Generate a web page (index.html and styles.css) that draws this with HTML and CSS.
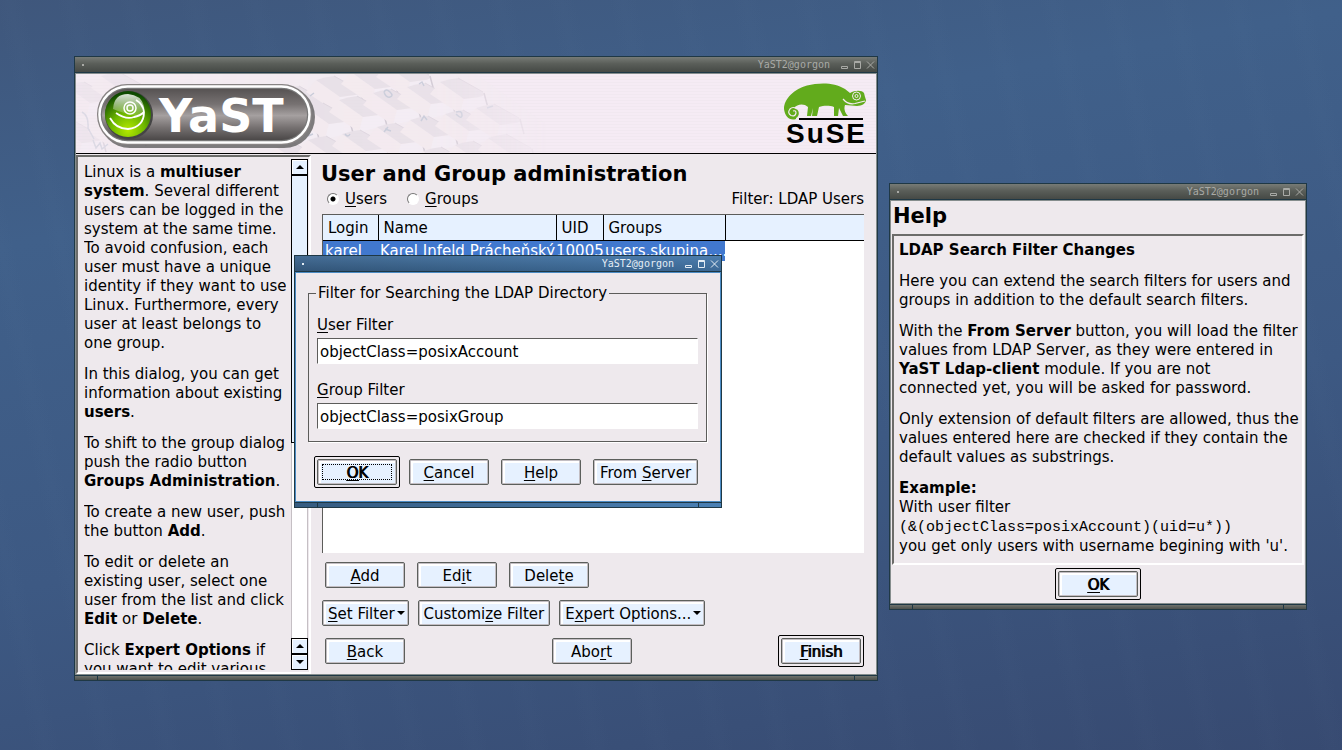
FILE: index.html
```html
<!DOCTYPE html>
<html lang="en">
<head>
<meta charset="utf-8">
<title>YaST2@gorgon</title>
<link rel="stylesheet" href="styles.css">
</head>
<body>
<svg class="defs" aria-hidden="true">
  <defs>
    <symbol id="wm" viewBox="0 0 36 10">
      <path d="M2.500 6.500h6v2h-6zM15.500 2.500h6v6h-6zM15.500 1.500h6v1h-6zM28 1.500l7 7M35 1.500l-7 7" fill="none" stroke="currentColor"/>
    </symbol>
    <g id="key">
      <path d="M0 4L24 21L20 36L-10 16Z" fill="#f3eaee"/>
      <path d="M24 21L40 19Q45 17 44 15L48 29L20 36Z" fill="#f3edf4"/>
      <path d="M0 4Q9 1 18 0L43 14Q46 18 39 19L24 21Z" fill="#e6dfe6"/>
      <path d="M44 15L48 30" stroke="#cdc6d0" stroke-width="1.500" fill="none"/>
      <path d="M18 0L43 14" stroke="#dcd4dd" fill="none"/>
    </g>
  </defs>
</svg>

<main class="desktop">
  <section class="window main-window" aria-label="User and Group administration">
    <div class="titlebar"><span class="dot"></span><span class="caption">YaST2@gorgon</span><svg class="wm"><use href="#wm"/></svg></div>
    <div class="body">
      <header class="banner">
        <svg class="keys" viewBox="0 0 480 79" aria-hidden="true">
          <defs>
            <linearGradient id="fade"><stop offset="0" stop-color="#fff" stop-opacity=".45"/><stop offset=".5" stop-color="#fff" stop-opacity=".9"/><stop offset=".75" stop-color="#fff" stop-opacity=".8"/><stop offset="1" stop-color="#fff" stop-opacity="0"/></linearGradient>
            <mask id="m"><rect width="480" height="79" fill="url(#fade)"/></mask>
          </defs>
          <g mask="url(#m)">
            <path d="M0 0H400L470 50V79H0Z" fill="#f2ebf0"/>
            <use href="#key" x="-10" y="8"/><use href="#key" x="-18" y="48"/><use href="#key" x="22" y="42"/>
            <use href="#key" x="25" y="-2"/><use href="#key" x="205" y="12"/><use href="#key" x="240" y="2"/><use href="#key" x="275" y="-6"/><use href="#key" x="310" y="-13"/>
            <use href="#key" x="195" y="35"/><use href="#key" x="229" y="29"/><use href="#key" x="263" y="22"/><use href="#key" x="297" y="15"/><use href="#key" x="331" y="9"/><use href="#key" x="364" y="4"/>
            <use href="#key" x="200" y="69"/><use href="#key" x="232" y="62"/><use href="#key" x="266" y="56"/><use href="#key" x="301" y="49"/><use href="#key" x="334" y="42"/><use href="#key" x="369" y="36"/><use href="#key" x="400" y="30"/>
            <use href="#key" x="313" y="79"/><use href="#key" x="347" y="73"/><use href="#key" x="379" y="67"/><use href="#key" x="412" y="60"/>
            <path d="M6 38Q13 42 12 54l6 11M17 66l3 8 4-5 2 6 6-5M308 18q2-4 6 0t0 5-6-5M343 10l3-2 2 4M380 38q6-2 6 3t-6-1M308 58l4-5m-3 2 6 2M345 47l3-5 3 4M269 60q3 4 5 0M234 22l4-3M232 62l5-2M119 67l5-6 3 5-4 4M411 34l6-2M160 18l6-3" fill="none" stroke="#c3c8d6" stroke-width="1.500"/>
          </g>
        </svg>
        <svg class="yast" viewBox="0 0 222 70" role="img" aria-label="YaST">
          <defs>
            <linearGradient id="pill" x2="0" y2="1"><stop offset="0" stop-color="#575353"/><stop offset=".3" stop-color="#777272"/><stop offset=".52" stop-color="#a5a0a0"/><stop offset=".75" stop-color="#777272"/><stop offset="1" stop-color="#4b4848"/></linearGradient>
            <radialGradient id="ball" cx=".5" cy=".85" r=".8"><stop offset="0" stop-color="#b4e800"/><stop offset=".45" stop-color="#6fb800"/><stop offset="1" stop-color="#0d4a00"/></radialGradient>
            <linearGradient id="gloss" x2="0" y2="1"><stop offset="0" stop-color="#fff" stop-opacity=".85"/><stop offset="1" stop-color="#fff" stop-opacity=".1"/></linearGradient>
          </defs>
          <rect x="5" y="5" width="216" height="62" rx="31" fill="#555" opacity=".75"/>
          <rect x="3" y="3" width="215" height="61" rx="30" fill="#888484"/>
          <rect x="5.500" y="5.500" width="210" height="56" rx="28" fill="#777" stroke="#fff" stroke-width="2.500"/>
          <rect x="8" y="8" width="205" height="51" rx="25" fill="url(#pill)"/>
          <circle cx="35" cy="34" r="24" fill="#444"/>
          <circle cx="34" cy="33" r="23" fill="url(#ball)"/>
          <path d="M19 28Q20 13 34 13Q47 14 50 25Q52 34 45 35Q30 33 19 28Z" fill="url(#gloss)"/>
          <path d="M22 32Q32 39 40 36Q46 35 50 31M16 37Q22 48 34 48Q50 46 50 31Q49 23 42 19" fill="none" stroke="#fff" stroke-width="1.800"/>
          <circle cx="36" cy="27" r="6" fill="none" stroke="#fff" stroke-width="1.500"/><circle cx="36" cy="27" r="3" fill="none" stroke="#fff" stroke-width="1.500"/>
          <text x="65" y="51" class="yast-text">YaST</text>
        </svg>
        <div class="suse">
          <svg viewBox="0 0 84 38" aria-hidden="true">
            <path d="M13 36C7 38 2 34 1 26C1 15 12 6 24 2.500C36-.5 51-1 62 6L67 10C72 7 79 7 81 10L82 14L83 17C83 20 79 23 74 23L62 22C61 25 61 29 65 33L60 33L56 25L55 33L51 33L51 24C45 22 40 23 36 24L34 33H29L30 25L28 33H24L25 24C21 20 14 21 11 25C17 26 17 33 13 35" fill="#62ab1c"/>
            <path d="M10 28q3-1 3 2-1 4-5 2.500Q4 30 7 26Q10 23 14 26" fill="none" stroke="#f5eaf4" stroke-width="1.200"/>
            <path d="M60 16Q65 22 72 20.500L82 18" fill="none" stroke="#f5eaf4" stroke-width="1.200"/>
            <circle cx="73.500" cy="13" r="4" fill="none" stroke="#f5eaf4"/><circle cx="73.500" cy="13" r="1.500" fill="none" stroke="#f5eaf4"/>
            <path d="M16 36H80" stroke="#000" stroke-width="2"/>
          </svg>
          <div class="suse-name"><span>S</span><span>u</span><span>S</span><span>E</span></div>
        </div>
      </header>
      <div class="columns">
        <aside class="sidebar">
          <div class="help-text">
            <p>Linux is a <b>multiuser<br>system</b>. Several different<br>users can be logged in the<br>system at the same time.<br>To avoid confusion, each<br>user must have a unique<br>identity if they want to use<br>Linux. Furthermore, every<br>user at least belongs to<br>one group.</p>
            <p>In this dialog, you can get<br>information about existing<br><b>users</b>.</p>
            <p>To shift to the group dialog<br>push the radio button<br><b>Groups Administration</b>.</p>
            <p>To create a new user, push<br>the button <b>Add</b>.</p>
            <p>To edit or delete an<br>existing user, select one<br>user from the list and click<br><b>Edit</b> or <b>Delete</b>.</p>
            <p>Click <b>Expert Options</b> if<br>you want to edit various</p>
          </div>
          <div class="scrollbar">
            <button class="arrow" type="button" aria-label="Scroll up"><svg viewBox="0 0 8 4"><path d="M0 4L4 0L8 4Z"/></svg></button>
            <div class="thumb"></div>
            <div class="track"></div>
            <button class="arrow" type="button" aria-label="Page up"><svg viewBox="0 0 8 4"><path d="M0 4L4 0L8 4Z"/></svg></button>
            <button class="arrow" type="button" aria-label="Scroll down"><svg viewBox="0 0 8 4"><path d="M0 0L4 4L8 0Z"/></svg></button>
          </div>
        </aside>
        <div class="content">
          <h1>User and Group administration</h1>
          <div class="view-row">
            <label><input type="radio" name="view" checked><span><u>U</u>sers</span></label>
            <label><input type="radio" name="view"><span><u>G</u>roups</span></label>
            <span class="filter">Filter: LDAP Users</span>
          </div>
          <div class="list">
            <table>
              <colgroup><col class="c-login"><col class="c-name"><col class="c-uid"><col class="c-groups"><col></colgroup>
              <thead><tr><th>Login</th><th>Name</th><th>UID</th><th>Groups</th><th></th></tr></thead>
              <tbody><tr class="selected"><td>karel</td><td>Karel Infeld Prácheňský</td><td class="uid">10005</td><td>users,skupina,...</td><td></td></tr></tbody>
            </table>
          </div>
          <div class="buttons inset"><button class="btn" type="button"><u>A</u>dd</button><button class="btn" type="button">Ed<u>i</u>t</button><button class="btn" type="button">Dele<u>t</u>e</button></div>
          <div class="buttons menus"><button class="btn" type="button"><u>S</u>et Filter<svg class="caret" viewBox="0 0 8 4"><path d="M0 0L4 4L8 0Z"/></svg></button><button class="btn" type="button">Customi<u>z</u>e Filter</button><button class="btn" type="button">E<u>x</u>pert Options...<svg class="caret" viewBox="0 0 8 4"><path d="M0 0L4 4L8 0Z"/></svg></button></div>
          <div class="buttons nav"><button class="btn" type="button"><u>B</u>ack</button><button class="btn" type="button">Abo<u>r</u>t</button><span class="default"><button class="btn" type="button"><u>F</u>inish</button></span></div>
        </div>
      </div>
    </div>
    <div class="grip"></div>
  </section>

  <section class="window help-window" aria-label="Help">
    <div class="titlebar"><span class="dot"></span><span class="caption">YaST2@gorgon</span><svg class="wm"><use href="#wm"/></svg></div>
    <div class="body">
      <h2>Help</h2>
      <div class="help-box">
        <p><b>LDAP Search Filter Changes</b></p>
        <p>Here you can extend the search filters for users and<br>groups in addition to the default search filters.</p>
        <p>With the <b>From Server</b> button, you will load the filter<br>values from LDAP Server, as they were entered in<br><b>YaST Ldap-client</b> module. If you are not<br>connected yet, you will be asked for password.</p>
        <p>Only extension of default filters are allowed, thus the<br>values entered here are checked if they contain the<br>default values as substrings.</p>
        <p><b>Example:</b><br>With user filter<br><code>(&amp;(objectClass=posixAccount)(uid=u*))</code><br>you get only users with username begining with 'u'.</p>
      </div>
      <div class="help-actions"><span class="default"><button class="btn" type="button"><u>O</u>K</button></span></div>
    </div>
    <div class="grip"></div>
  </section>

  <form class="window dialog" aria-label="LDAP filter">
    <div class="titlebar"><span class="dot"></span><span class="caption">YaST2@gorgon</span><svg class="wm"><use href="#wm"/></svg></div>
    <div class="body">
      <fieldset>
        <legend>Filter for Searching the LDAP Directory</legend>
        <label for="uf"><u>U</u>ser Filter</label>
        <input id="uf" type="text" value="objectClass=posixAccount">
        <label for="gf"><u>G</u>roup Filter</label>
        <input id="gf" type="text" value="objectClass=posixGroup">
      </fieldset>
      <div class="dialog-actions"><span class="default focused"><button class="btn" type="button"><u>O</u>K</button></span><button class="btn" type="button"><u>C</u>ancel</button><button class="btn" type="button"><u>H</u>elp</button><button class="btn" type="button">From <u>S</u>erver</button></div>
    </div>
    <div class="grip"></div>
  </form>
</main>
</body>
</html>
```
FILE: styles.css
```css
* { box-sizing: border-box; }
html, body { height: 100%; margin: 0; }
body { font: 15px/19px "DejaVu Sans", Verdana, sans-serif; color: #000; overflow: hidden; }
p { margin: 0 0 12px; white-space: nowrap; }
u { text-decoration: underline; text-underline-offset: 2px; text-decoration-skip-ink: none; }
h1, h2 { margin: 0; font-size: 21px; line-height: 28px; font-weight: bold; }
.defs { position: absolute; width: 0; height: 0; }

.desktop {
  position: relative;
  height: 100%;
  background:
    repeating-linear-gradient(78deg, transparent 0 30px, rgba(120, 150, 180, .02) 45px, transparent 60px),
    linear-gradient(170deg, #3f577c 0%, #40608a 25%, #3d5983 60%, #374a71 100%);
}

.window { position: absolute; display: flex; flex-direction: column; border: 1px solid #1f3845; }
.main-window { left: 74px; right: 464px; top: 56px; bottom: 69px; }
.help-window { right: 35px; top: 183px; width: 418px; }
.dialog { left: 294px; top: 255px; width: 428px; }
.titlebar {
  display: flex; align-items: center; flex: none; height: 16px; padding: 0 2px 0 7px;
  border-bottom: 1px solid #1f3845;
  background: linear-gradient(#777b76, #5a5e59 45%, #454945);
  color: #a9aaa6;
}
.dot { width: 2px; height: 2px; background: currentColor; }
.caption { margin-left: auto; font: 10px/14px "DejaVu Sans Mono", monospace; }
.wm { width: 36px; height: 10px; margin-left: 9px; }
.body { flex: 1; display: flex; flex-direction: column; min-height: 0; border: 1px solid #858d8d; background: #eee9ed; }
.grip { flex: none; height: 5px; border-top: 1px solid #1f3845; background: linear-gradient(90deg, transparent 22px, #1f3845 22px 23px, transparent 23px calc(100% - 23px), #1f3845 calc(100% - 23px) calc(100% - 22px), transparent calc(100% - 22px)), linear-gradient(#6e726d, #4d514d); }
.dialog .titlebar { background: linear-gradient(90deg, #28486633, #4a8ac855), linear-gradient(#4c76a0, #35587c); color: #e4edf5; }
.dialog .body { border-color: #4b8bc4; }
.dialog .grip { background: linear-gradient(90deg, transparent 22px, #1f3845 22px 23px, transparent 23px calc(100% - 23px), #1f3845 calc(100% - 23px) calc(100% - 22px), transparent calc(100% - 22px)), linear-gradient(90deg, #355b80, #4a80b4); }

.banner {
  display: flex; align-items: flex-start; flex: none; height: 80px; position: relative;
  border-bottom: 1px solid #000;
  background: repeating-linear-gradient(#f5ebf4 0 2px, #f1e8f0 2px 3px);
}
.keys { position: absolute; left: 0; top: 0; width: 480px; height: 79px; }
.yast { position: relative; width: 222px; height: 70px; margin: 7px 0 0 18px; }
.yast-text { font: bold 46px "DejaVu Sans", sans-serif; fill: #fff; }
.suse { width: 84px; margin: 9px 9px 0 auto; }
.suse svg { display: block; width: 84px; height: 38px; }
.suse-name { display: flex; justify-content: space-between; padding: 0 2px 0 3px; font: bold 28px/25px "Liberation Sans", sans-serif; }

.columns { flex: 1; display: flex; min-height: 0; }
.sidebar {
  flex: none; display: flex; justify-content: space-between; width: 235px; margin-top: 1px; padding: 2px 1px 2px 6px;
  border: 2px solid #fff; border-top-color: #6c6c6a; border-left-color: #6c6c6a;
}
.help-text { padding-top: 4px; overflow: hidden; }
.scrollbar { flex: none; display: flex; flex-direction: column; width: 17px; }
.arrow { display: flex; align-items: center; justify-content: center; flex: none; width: 100%; height: 16px; padding: 0; border: 1px solid #000; background: #e6f1ff; box-shadow: inset 1px 1px #fff; }
.arrow svg { width: 8px; height: 4px; }
.thumb { flex: 267; border: 1px solid #000; background: #e6f1ff; }
.track { flex: 196; border: solid #c5bfc4; border-width: 0 1px; background: #fff; }

.content { flex: 1; display: flex; flex-direction: column; min-width: 0; padding: 6px 12px 7px 11px; }
.content h1 { margin-left: -1px; }
.view-row { display: flex; align-items: center; height: 20px; margin: 1px 0 5px 5px; }
.view-row label { display: flex; align-items: center; margin-right: 20px; }
.view-row .filter { margin-left: auto; }
input[type="radio"] {
  appearance: none; width: 12px; height: 12px; margin: 0 6px 0 0; border: 1px solid #fff; border-top-color: #777; border-left-color: #777; border-radius: 50%;
  background: #fff;
}
input[type="radio"]:checked { background: radial-gradient(circle, #000 2px, #fff 3px); }
.list { flex: 1; min-height: 0; overflow: hidden; border: solid #5c5c5a; border-width: 1px 0 0 1px; background: #fff; }
table { width: 100%; border-collapse: collapse; table-layout: fixed; }
th, td { white-space: nowrap; text-align: left; font-weight: normal; }
th { height: 25px; padding: 2px 5px 0; border-right: 1px solid #000; border-bottom: 1px solid #000; background: #e6f1ff; }
th:last-child { border-right: 0; }
td { height: 20px; padding: 1px 0 0 2px; }
td.uid { padding-left: 0; }
.selected td:not(:last-child) { background: #4178ce; color: #fff; }
.c-login { width: 55px; }
.c-name { width: 178px; }
.c-uid { width: 47px; }
.c-groups { width: 122px; }

.btn {
  flex: none; min-width: 80px; height: 26px; padding: 2px 6px 0; border: 1px solid #5c5f5c; border-radius: 2px;
  background: #e6f1ff; box-shadow: inset 0 0 0 1px #c3bec3, inset 3px 3px #fff;
  font: inherit; color: #000; text-align: center; white-space: nowrap;
}
.default { display: inline-flex; padding: 2px; border: 1px solid #000; border-radius: 2px; }
.default .btn { text-shadow: 1px 0 #000; }
.focused { position: relative; }
.focused::after { content: ""; position: absolute; inset: 7px; border: 1px dotted #000; }
.buttons { display: flex; align-items: center; }
.inset { gap: 12px; margin: 9px 0 12px 3px; }
.menus { gap: 9px; }
.menus .btn { padding: 2px 5px 0; }
.caret { width: 8px; height: 4px; margin: 0 -2px 4px 2px; }
.nav { justify-content: space-between; margin: 9px 0 0 3px; }

.help-window h2 { height: 33px; padding: 1px 2px; }
.help-box { min-height: 331px; padding: 5px; border: 2px solid #fff; border-top-color: #6c6c6a; border-left-color: #6c6c6a; margin: 0 1px; }
.help-box p:last-child { margin: 0; }
code { font: 15px/19px "Liberation Mono", monospace; }
.help-actions { display: flex; justify-content: center; padding: 3px 0; }

.dialog .body { padding: 11px 13px 13px 12px; }
fieldset { min-width: 0; margin: 0 0 14px; padding: 13px 8px 12px; border: 1px solid #5c5c5a; box-shadow: 1px 1px #fff; }
legend { margin-left: -1px; padding: 0 2px; }
fieldset label { display: block; }
input[type="text"] { display: block; width: 100%; height: 26px; margin: 3px 0 17px; padding: 1px 2px 0; border: 1px solid #fff; border-top-color: #5c5c5a; border-left-color: #5c5c5a; border-radius: 0; background: #fff; font: inherit; outline: 0; }
input[type="text"]:last-child { margin-bottom: 0; }
.dialog-actions { display: flex; align-items: center; gap: 12px; padding-left: 6px; }
.dialog-actions .default { margin-right: -3px; }
```
